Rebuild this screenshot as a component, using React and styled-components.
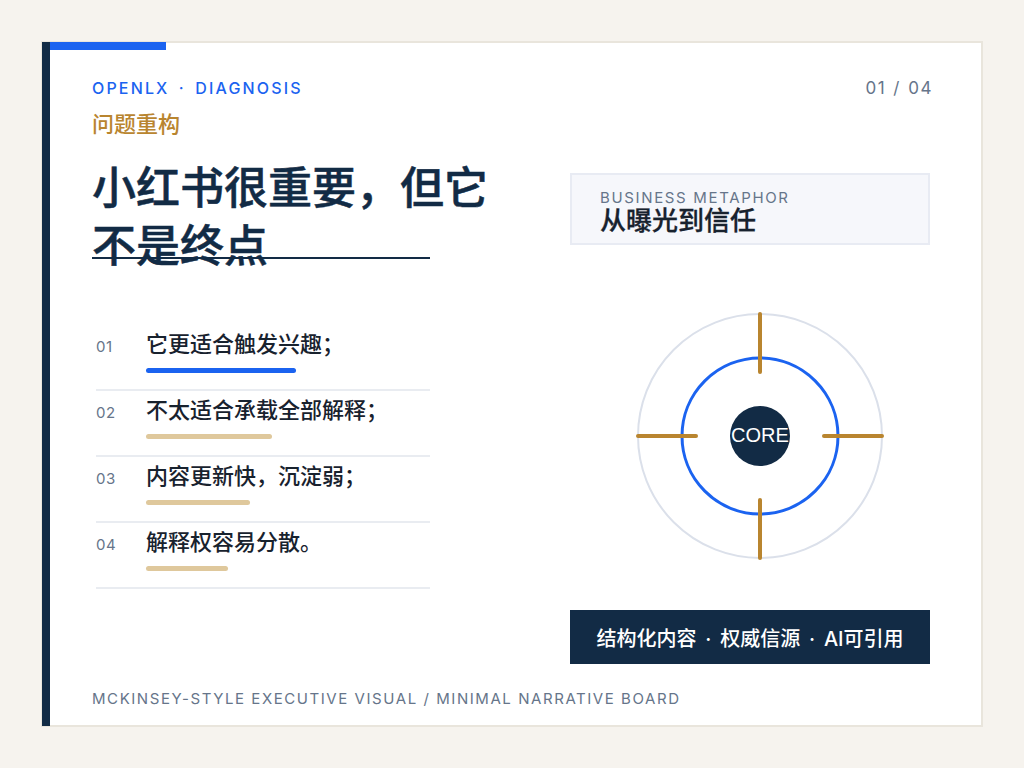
import styled, { createGlobalStyle } from "styled-components";

const navy = "#122b45";
const blue = "#1b63f0";
const gold = "#b9852f";
const slate = "#66758a";
const fonts = `Inter, "Noto Sans CJK SC", sans-serif`;

const GlobalStyle = createGlobalStyle`
  * {
    box-sizing: border-box;
  }
  html,
  body {
    margin: 0;
    padding: 0;
    background: #f6f3ee;
    font-family: ${fonts};
  }
`;

const Page = styled.div`
  width: 1024px;
  height: 768px;
  padding: 41px;
  overflow: hidden;
`;

const Board = styled.div`
  position: relative;
  width: 942px;
  height: 686px;
  padding: 33px 48px 16px 49px;
  display: flex;
  flex-direction: column;
  background: #fff;
  border: 2px solid #e9e5dc;

  &::before {
    content: "";
    position: absolute;
    left: -1px;
    top: -1px;
    bottom: -1px;
    width: 8px;
    background: ${navy};
  }
  &::after {
    content: "";
    position: absolute;
    left: 7px;
    top: -1px;
    width: 116px;
    height: 8px;
    background: ${blue};
  }
`;

const Header = styled.div`
  display: flex;
  justify-content: space-between;
  align-items: center;
  height: 24px;
`;

const Eyebrow = styled.div`
  font-size: 16px;
  font-weight: 500;
  letter-spacing: 2.15px;
  word-spacing: 3px;
  color: ${blue};
  white-space: pre;
`;

const PageNo = styled.div`
  font-size: 17px;
  letter-spacing: 1.5px;
  word-spacing: 1px;
  color: ${slate};
  white-space: pre;
`;

const Section = styled.div`
  margin-top: 10px;
  font-size: 22px;
  line-height: 28px;
  font-weight: 500;
  color: ${gold};
`;

const Columns = styled.div`
  flex: 1;
  display: grid;
  grid-template-columns: 338px 360px;
  column-gap: 140px;
`;

const LeftColumn = styled.div`
  display: flex;
  flex-direction: column;
`;

const Title = styled.h1`
  margin: 21px 0 0;
  height: 100px;
  font-size: 44px;
  line-height: 58px;
  font-weight: 500;
  -webkit-text-stroke: 0.5px ${navy};
  white-space: nowrap;
  color: ${navy};
  border-bottom: 2px solid ${navy};
`;

const List = styled.div`
  margin-top: 66px;
  margin-left: 4px;
  display: flex;
  flex-direction: column;
`;

const Row = styled.div`
  height: 66px;
  padding-top: 4px;
  display: grid;
  grid-template-columns: 50px 1fr;
  border-bottom: 2px solid #e9ecf1;
`;

const RowNo = styled.div`
  font-size: 15px;
  line-height: 30px;
  letter-spacing: 0.6px;
  color: ${slate};
  padding-top: 3px;
`;

const RowText = styled.div`
  font-size: 22px;
  line-height: 30px;
  font-weight: 500;
  color: #18222e;
`;

const Bar = styled.div`
  height: 5px;
  margin-top: 9px;
  border-radius: 3px;
  width: ${(p) => p.$width}px;
  background: ${(p) => (p.$active ? blue : "#dfc89c")};
`;

const RightColumn = styled.div`
  display: flex;
  flex-direction: column;
  align-items: center;
  padding-top: 35px;
`;

const Metaphor = styled.div`
  width: 100%;
  height: 72px;
  padding: 14px 28px 0;
  background: #f6f7fb;
  border: 2px solid #e8ebf3;
`;

const MetaphorLabel = styled.div`
  font-size: 15px;
  line-height: 18px;
  letter-spacing: 1.65px;
  color: ${slate};
`;

const MetaphorTitle = styled.div`
  font-size: 26px;
  line-height: 28px;
  font-weight: 500;
  -webkit-text-stroke: 0.3px #18222e;
  color: #18222e;
`;

const Diagram = styled.svg`
  display: block;
  margin-top: 66px;
  margin-left: 20px;
`;

const CoreLabel = styled.text`
  font-family: "Liberation Sans", Arial, sans-serif;
  font-size: 20px;
  fill: #fff;
`;

const Pillars = styled.div`
  width: 100%;
  height: 54px;
  margin-top: 49px;
  display: flex;
  align-items: center;
  justify-content: center;
  background: ${navy};
  color: #fff;
  font-size: 20px;
  font-weight: 500;
  word-spacing: 3.5px;
  white-space: pre;
`;

const Footer = styled.div`
  font-size: 15px;
  line-height: 20px;
  letter-spacing: 1.56px;
  color: ${slate};
  white-space: pre;
`;

const items = [
  { text: "它更适合触发兴趣；", width: 150, active: true },
  { text: "不太适合承载全部解释；", width: 126 },
  { text: "内容更新快，沉淀弱；", width: 104 },
  { text: "解释权容易分散。", width: 82 },
];

const ticks = [
  [122, 3, 122, 61],
  [122, 189, 122, 247],
  [0, 125, 58, 125],
  [186, 125, 244, 125],
];

const App = () => {
  return (
    <Page>
      <GlobalStyle />
      <Board>
        <Header>
          <Eyebrow>OPENLX · DIAGNOSIS</Eyebrow>
          <PageNo>01 / 04</PageNo>
        </Header>
        <Section>问题重构</Section>
        <Columns>
          <LeftColumn>
            <Title>
              小红书很重要，但它
              <br />
              不是终点
            </Title>
            <List>
              {items.map((item, i) => (
                <Row key={item.text}>
                  <RowNo>0{i + 1}</RowNo>
                  <div>
                    <RowText>{item.text}</RowText>
                    <Bar $width={item.width} $active={item.active} />
                  </div>
                </Row>
              ))}
            </List>
          </LeftColumn>
          <RightColumn>
            <Metaphor>
              <MetaphorLabel>BUSINESS METAPHOR</MetaphorLabel>
              <MetaphorTitle>从曝光到信任</MetaphorTitle>
            </Metaphor>
            <Diagram width="250" height="250" viewBox="-3 0 250 250">
              <circle cx="122" cy="125" r="122" fill="none" stroke="#dbe0ea" strokeWidth="2" />
              <circle cx="122" cy="125" r="78" fill="none" stroke={blue} strokeWidth="3" />
              <circle cx="122" cy="125" r="30" fill={navy} />
              {ticks.map(([x1, y1, x2, y2]) => (
                <line
                  key={`${x1}-${y1}`}
                  x1={x1}
                  y1={y1}
                  x2={x2}
                  y2={y2}
                  stroke={gold}
                  strokeWidth="4"
                  strokeLinecap="round"
                />
              ))}
              <CoreLabel x="122" y="131" textAnchor="middle">
                CORE
              </CoreLabel>
            </Diagram>
            <Pillars>结构化内容 · 权威信源 · AI可引用</Pillars>
          </RightColumn>
        </Columns>
        <Footer>MCKINSEY-STYLE EXECUTIVE VISUAL / MINIMAL NARRATIVE BOARD</Footer>
      </Board>
    </Page>
  );
};

export default App;
